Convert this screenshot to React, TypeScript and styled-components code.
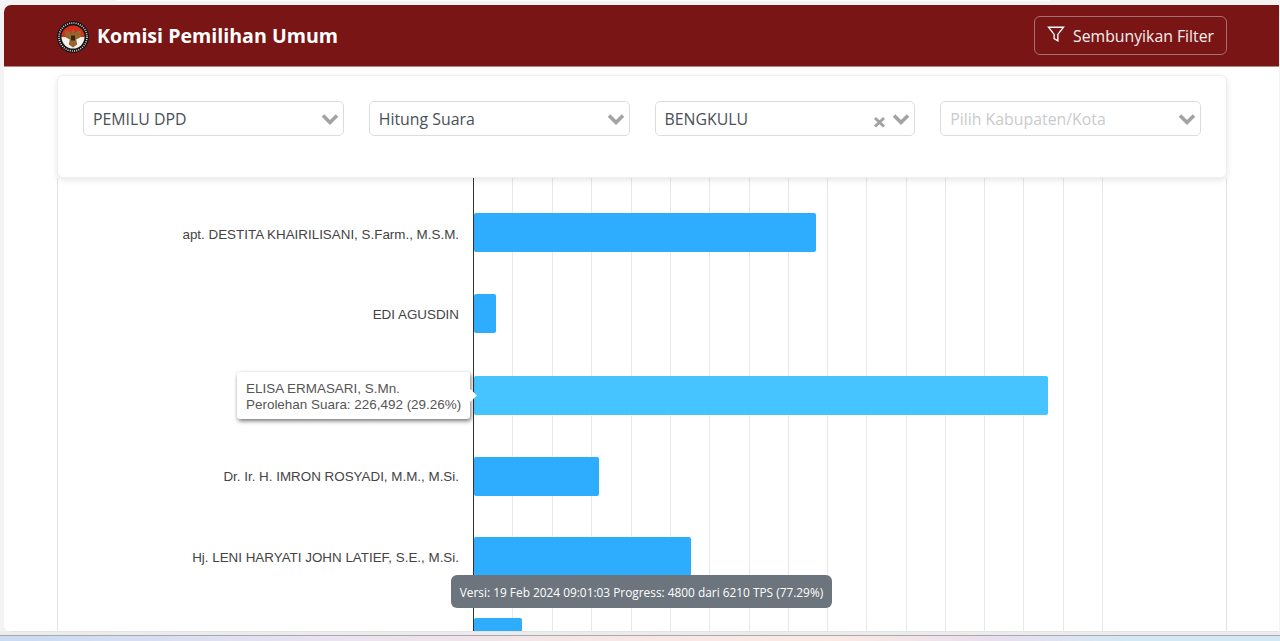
import React from "react";
import styled, { createGlobalStyle } from "styled-components";

const Global = createGlobalStyle`
  html, body { margin: 0; padding: 0; background: #f3f3f3; overflow: hidden; }
  * { box-sizing: border-box; }
`;

const Screen = styled.div`
  width: 1280px;
  height: 641px;
  display: flex;
  flex-direction: column;
  overflow: hidden;
  position: relative;
  background: #f4f3f3;
  font-family: "Open Sans", "Noto Sans", sans-serif;
`;

const TopStrip = styled.div`
  flex: 0 0 5px;
  padding-left: 116px;
`;

const TabEdge = styled.div`
  width: 934px;
  height: 1px;
  background: #fff;
  border-radius: 0 0 4px 4px;
`;

const Viewport = styled.div`
  flex: 0 0 627px;
  margin-left: 4px;
  margin-right: 1px;
  background: #fff;
  border-top-left-radius: 7px;
  border-bottom-left-radius: 7px;
  overflow: hidden;
  display: flex;
  flex-direction: column;
  position: relative;
`;

const Header = styled.header`
  flex: 0 0 62px;
  background: #7a1515;
  border-bottom: 1px solid #b98484;
  display: flex;
  align-items: center;
  justify-content: space-between;
  padding: 0 52px 0 53px;
`;

const Brand = styled.div`
  display: flex;
  align-items: center;
  gap: 8px;
  color: #fff;
  font-size: 19.6px;
  font-weight: 700;
  margin-top: -1px;
`;

const LogoMark = styled.svg`
  margin-top: 4px;
`;

const FilterButton = styled.button`
  width: 193px;
  height: 39px;
  display: flex;
  align-items: center;
  gap: 8px;
  margin-top: -1px;
  border: 1px solid #a86f6f;
  border-radius: 6px;
  background: transparent;
  color: #f8eeee;
  font-family: inherit;
  font-size: 15.8px;
  padding: 2px 0 0 12px;
`;

const FilterIcon = styled.svg`
  margin-top: -4px;
`;

const Content = styled.main`
  flex: 1;
  padding: 8px 52px 0 53px;
  display: flex;
  flex-direction: column;
  min-height: 0;
  border-bottom: 1px solid #e4e4e4;
`;

const FilterCard = styled.section`
  flex: 0 0 103px;
  background: #fff;
  border: 1px solid #efefef;
  border-radius: 6px;
  box-shadow: 0 2px 6px rgba(0, 0, 0, 0.1);
  padding: 25px;
  display: grid;
  grid-template-columns: repeat(4, 1fr);
  column-gap: 25px;
  align-items: start;
  position: relative;
  z-index: 1;
`;

const Select = styled.div`
  height: 35px;
  border: 1px solid #dcdcdc;
  border-radius: 5px;
  display: flex;
  align-items: center;
  padding: 0 4px 0 9px;
  background: #fff;
`;

const SelectValue = styled.span<{ $placeholder?: boolean }>`
  flex: 1;
  font-size: 15.85px;
  color: ${(p) => (p.$placeholder ? "#c9cbcc" : "#495057")};
  white-space: nowrap;
`;

const ClearIcon = styled.svg`
  margin-top: 6px;
  margin-right: 6px;
`;

const ChartCard = styled.section`
  flex: 1;
  min-height: 0;
  border-left: 1px solid #e3e3e3;
  border-right: 1px solid #e3e3e3;
  background: #fff;
  overflow: hidden;
`;

const Tooltip = styled.div`
  position: absolute;
  left: 233px;
  top: 367px;
  width: 233px;
  height: 47px;
  background: #fff;
  border-radius: 3px;
  box-shadow: 1px 2px 4px rgba(0, 0, 0, 0.55);
  padding: 9px 9px;
  font-family: "Liberation Sans", Arial, sans-serif;
  font-size: 13.45px;
  line-height: 16px;
  color: #555;
  white-space: nowrap;
  &::after {
    content: "";
    position: absolute;
    right: -5px;
    top: 19px;
    width: 9px;
    height: 9px;
    background: #fff;
    transform: rotate(45deg);
  }
`;

const Toast = styled.div`
  position: absolute;
  left: 447px;
  top: 570px;
  width: 381px;
  height: 33px;
  background: #6c757d;
  border-radius: 6px;
  color: #fff;
  font-family: "Open Sans", sans-serif;
  font-size: 11.87px;
  display: flex;
  align-items: center;
  justify-content: center;
  white-space: nowrap;
`;

const PageEdge = styled.div`
  flex: 0 0 5px;
  margin-top: -1px;
  background: #ececec;
  border-bottom: 1px solid #a9a9ad;
`;

const Taskbar = styled.div`
  flex: 1;
  background: linear-gradient(90deg, #c9dbf2 0%, #e9e2f0 25%, #f6e6e6 45%, #fbe9e3 65%, #e8dfee 78%, #d3e7f4 88%, #d3e7f4 100%);
`;

const Chevron = () => (
  <svg width="18" height="12" viewBox="0 0 18 12">
    <path d="M2 2.5 L9 9.5 L16 2.5" fill="none" stroke="#a3a3a3" strokeWidth="3.6" />
  </svg>
);

const grid = [512, 552, 591, 631, 670, 709, 749, 788, 827, 866, 906, 945, 984, 1023, 1063, 1102];

const rows = [
  { name: "apt. DESTITA KHAIRILISANI, S.Farm., M.S.M.", y: 213, end: 816, base: 239 },
  { name: "EDI AGUSDIN", y: 294, end: 496, base: 319 },
  { name: "ELISA ERMASARI, S.Mn.", y: 376, end: 1048, base: 400, active: true },
  { name: "Dr. Ir. H. IMRON ROSYADI, M.M., M.Si.", y: 457, end: 599, base: 481 },
  { name: "Hj. LENI HARYATI JOHN LATIEF, S.E., M.Si.", y: 537, end: 691, base: 562 },
  { name: "", y: 618, end: 522, base: 640 },
];

const Chart = () => {
  const ox = 58;
  const oy = 178;
  return (
    <svg width="1167" height="454" viewBox="0 0 1167 454" style={{ display: "block" }}>
      {grid.map((x) => (
        <rect key={x} x={x - ox} y={0} width={1} height={454} fill="#e8e8e8" />
      ))}
      {rows.map((r) => (
        <g key={r.y}>
          <rect
            x={474 - ox}
            y={r.y - oy}
            width={r.end - 474}
            height={39}
            rx={2}
            fill={r.active ? "#45c4ff" : "#2eadff"}
          />
          {r.name && !r.active && (
            <text
              x={459 - ox}
              y={r.base - oy}
              textAnchor="end"
              fontFamily="Liberation Sans, Arial, sans-serif"
              fontSize="13.4"
              fill="#444"
            >
              {r.name}
            </text>
          )}
        </g>
      ))}
      <rect x={473 - ox} y={0} width={1} height={454} fill="#333" />
    </svg>
  );
};

const Logo = () => (
  <LogoMark width="32" height="32" viewBox="0 0 32 32">
    <circle cx="16" cy="16" r="16" fill="#1c1516" />
    <circle cx="16" cy="16" r="14" fill="none" stroke="#d9d5d3" strokeWidth="1.6" strokeDasharray="1 1.2" />
    <path d="M4.5 16 A11.5 11.5 0 0 1 27.5 16 Z" fill="#d8301f" />
    <path d="M4.5 16 H27.5 A11.5 11.5 0 0 1 4.5 16 Z" fill="#f5f1ee" />
    <path d="M16 8 l1.6 2.4 -0.8 2 5 -3 2.4 1 -1 6 -4 2 1 5 -4.2 3 -4.2 -3 1 -5 -4 -2 -1 -6 2.4 -1 5 3 -0.8 -2 Z" fill="#96662f" />
    <rect x="14" y="14.5" width="4" height="5" fill="#3a2418" />
  </LogoMark>
);

export default function App() {
  return (
    <Screen>
      <Global />
      <TopStrip>
        <TabEdge />
      </TopStrip>
      <Viewport>
        <Header>
          <Brand>
            <Logo />
            Komisi Pemilihan Umum
          </Brand>
          <FilterButton>
            <FilterIcon width="18" height="18" viewBox="0 0 24 24" fill="none" stroke="#fff" strokeWidth="1.8">
              <polygon points="2,3 22,3 14.5,12.5 14.5,21 9.5,18 9.5,12.5" />
            </FilterIcon>
            Sembunyikan Filter
          </FilterButton>
        </Header>
        <Content>
          <FilterCard>
            <Select>
              <SelectValue>PEMILU DPD</SelectValue>
              <Chevron />
            </Select>
            <Select>
              <SelectValue>Hitung Suara</SelectValue>
              <Chevron />
            </Select>
            <Select>
              <SelectValue>BENGKULU</SelectValue>
              <ClearIcon width="13" height="12" viewBox="0 0 13 12">
                <path d="M2 2 L11 10.5 M11 2 L2 10.5" stroke="#a3a3a3" strokeWidth="3" />
              </ClearIcon>
              <Chevron />
            </Select>
            <Select>
              <SelectValue $placeholder>Pilih Kabupaten/Kota</SelectValue>
              <Chevron />
            </Select>
          </FilterCard>
          <ChartCard>
            <Chart />
          </ChartCard>
        </Content>
        <Tooltip>
          ELISA ERMASARI, S.Mn.
          <br />
          Perolehan Suara: 226,492 (29.26%)
        </Tooltip>
        <Toast>Versi: 19 Feb 2024 09:01:03 Progress: 4800 dari 6210 TPS (77.29%)</Toast>
      </Viewport>
      <PageEdge />
      <Taskbar />
    </Screen>
  );
}
